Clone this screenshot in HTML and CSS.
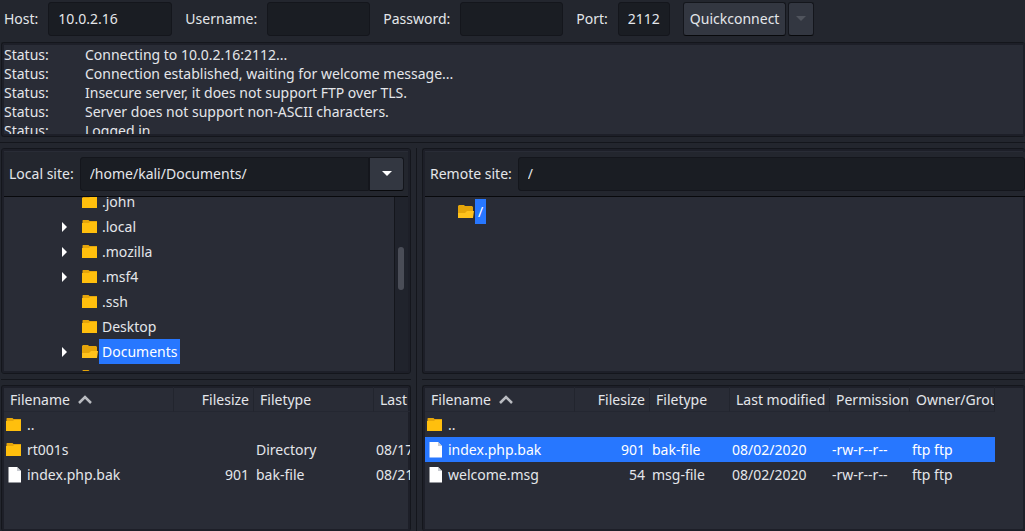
FILE: index.html
```
<!DOCTYPE html>
<html lang="en">
<head>
<meta charset="utf-8">
<title>FTP client</title>
<link rel="stylesheet" href="styles.css">
</head>
<body>
<svg class="defs" aria-hidden="true">
  <symbol id="folder" viewBox="0 0 16 16"><path fill="#e5a50a" d="M.5 14V1.500L1 1h5.500l1 1H15v6H.5z"/><path fill="#ffbf0d" d="M0 4h7l1-1h7v11H0z"/></symbol>
  <symbol id="folder-open" viewBox="0 0 16 16"><path fill="#e5a50a" d="M0 14V2l1-1h5l1 1h7l1 1v11z"/><path fill="#ffc21c" d="M0 14V9h7l2-2h7l-1 7z"/></symbol>
  <symbol id="file" viewBox="0 0 16 16"><path fill="#fff" d="M2.500 0H11l4 4v11.500H2.500z"/><path fill="#c9ccd2" d="M11 0l4 4h-4z"/></symbol>
  <symbol id="right" viewBox="0 0 6 10"><path fill="#fff" d="M0 0l5 5-5 5z"/></symbol>
  <symbol id="down" viewBox="0 0 10 5"><path fill="currentColor" d="M0 0h10L5 5z"/></symbol>
  <symbol id="sort" viewBox="0 0 14 9"><path fill="none" stroke="#b9bbc0" stroke-width="2.500" d="M1 8l6-6 6 6"/></symbol>
</svg>

<form class="connect">
  <label for="host">Host:</label>
  <input class="field host" id="host" type="text" value="10.0.2.16">
  <label for="user">Username:</label>
  <input class="field credential" id="user" type="text">
  <label for="pass">Password:</label>
  <input class="field credential" id="pass" type="password">
  <label for="port">Port:</label>
  <input class="field port" id="port" type="text" value="2112">
  <div class="buttons">
    <button class="button" type="button">Quickconnect</button>
    <button class="button history" type="button" disabled aria-label="Recent servers"><svg class="caret"><use href="#down"/></svg></button>
  </div>
</form>

<section class="log frame" aria-label="Message log">
  <dl class="messages">
    <dt>Status:</dt><dd>Connecting to 10.0.2.16:2112...</dd>
    <dt>Status:</dt><dd>Connection established, waiting for welcome message...</dd>
    <dt>Status:</dt><dd>Insecure server, it does not support FTP over TLS.</dd>
    <dt>Status:</dt><dd>Server does not support non-ASCII characters.</dd>
    <dt>Status:</dt><dd>Logged in</dd>
  </dl>
</section>
<div class="splitter"></div>

<main class="panes">
  <div class="side local">
    <section class="frame browser">
      <div class="path">
        <label for="local">Local site:</label>
        <div class="combo">
          <input class="field" id="local" type="text" value="/home/kali/Documents/">
          <button class="button open" type="button" aria-label="Show local paths"><svg class="caret"><use href="#down"/></svg></button>
        </div>
      </div>
      <div class="tree-area">
        <ul class="tree scrolled">
          <li><span class="twist"></span><svg class="icon"><use href="#folder"/></svg><span class="node">.john</span></li>
          <li><span class="twist"><svg class="arrow"><use href="#right"/></svg></span><svg class="icon"><use href="#folder"/></svg><span class="node">.local</span></li>
          <li><span class="twist"><svg class="arrow"><use href="#right"/></svg></span><svg class="icon"><use href="#folder"/></svg><span class="node">.mozilla</span></li>
          <li><span class="twist"><svg class="arrow"><use href="#right"/></svg></span><svg class="icon"><use href="#folder"/></svg><span class="node">.msf4</span></li>
          <li><span class="twist"></span><svg class="icon"><use href="#folder"/></svg><span class="node">.ssh</span></li>
          <li><span class="twist"></span><svg class="icon"><use href="#folder"/></svg><span class="node">Desktop</span></li>
          <li><span class="twist"><svg class="arrow"><use href="#right"/></svg></span><svg class="icon"><use href="#folder-open"/></svg><span class="node selected">Documents</span></li>
          <li><span class="twist"></span><svg class="icon"><use href="#folder"/></svg></li>
        </ul>
        <div class="scrollbar"><div class="thumb"></div></div>
      </div>
    </section>
    <div class="splitter"></div>
    <section class="frame listing">
      <table class="files local-files">
        <colgroup><col class="c-name"><col class="c-size"><col class="c-type"><col class="c-date"></colgroup>
        <thead><tr><th><span class="name">Filename <svg class="sort"><use href="#sort"/></svg></span></th><th class="num">Filesize</th><th>Filetype</th><th>Last modified</th></tr></thead>
        <tbody>
          <tr><td><span class="name"><svg class="icon"><use href="#folder"/></svg>..</span></td><td></td><td></td><td></td></tr>
          <tr><td><span class="name"><svg class="icon"><use href="#folder"/></svg>rt001s</span></td><td></td><td>Directory</td><td>08/17/2020</td></tr>
          <tr><td><span class="name"><svg class="icon"><use href="#file"/></svg>index.php.bak</span></td><td class="num">901</td><td>bak-file</td><td>08/21/2020</td></tr>
        </tbody>
      </table>
    </section>
  </div>

  <div class="divider"></div>

  <div class="side remote">
    <section class="frame browser">
      <div class="path">
        <label for="remote">Remote site:</label>
        <div class="combo"><input class="field" id="remote" type="text" value="/"></div>
      </div>
      <div class="tree-area">
        <ul class="tree root">
          <li><span class="twist"></span><svg class="icon"><use href="#folder-open"/></svg><span class="node selected">/</span></li>
        </ul>
      </div>
    </section>
    <div class="splitter"></div>
    <section class="frame listing">
      <table class="files remote-files">
        <colgroup><col class="c-name"><col class="c-size"><col class="c-type"><col class="c-date"><col class="c-perm"><col class="c-owner"></colgroup>
        <thead><tr><th><span class="name">Filename <svg class="sort"><use href="#sort"/></svg></span></th><th class="num">Filesize</th><th>Filetype</th><th>Last modified</th><th>Permission</th><th>Owner/Group</th></tr></thead>
        <tbody>
          <tr><td><span class="name"><svg class="icon"><use href="#folder"/></svg>..</span></td><td></td><td></td><td></td><td></td><td></td></tr>
          <tr class="selected"><td><span class="name"><svg class="icon"><use href="#file"/></svg>index.php.bak</span></td><td class="num">901</td><td>bak-file</td><td>08/02/2020</td><td>-rw-r--r--</td><td>ftp ftp</td></tr>
          <tr><td><span class="name"><svg class="icon"><use href="#file"/></svg>welcome.msg</span></td><td class="num">54</td><td>msg-file</td><td>08/02/2020</td><td>-rw-r--r--</td><td>ftp ftp</td></tr>
        </tbody>
      </table>
    </section>
  </div>
</main>
</body>
</html>
```

FILE: styles.css
```
:root {
  --window: #23262e;
  --view: #292c36;
  --input: #1a1d23;
  --edge: #14161c;
  --text: #e4e6ea;
  --accent: #2777ff;
}

* { box-sizing: border-box; }

body {
  margin: 0;
  height: 100vh;
  display: flex;
  flex-direction: column;
  overflow: hidden;
  background: var(--window);
  color: var(--text);
  font: 14px/19px "Noto Sans", sans-serif;
}

.defs { display: none; }

input, button { font: inherit; color: inherit; }

.field {
  height: 34px;
  min-width: 0;
  padding: 0 9px 2px;
  background: var(--input);
  border: 1px solid var(--edge);
  border-radius: 3px;
}

.button {
  height: 34px;
  padding: 0 6px 2px;
  background: #333741;
  border: 1px solid var(--edge);
  border-bottom-color: #08090c;
  border-radius: 3px;
}

.caret { display: block; width: 10px; height: 5px; margin: auto; }

/* Connection bar */
.connect {
  display: flex;
  align-items: center;
  padding: 2px 4px 6px;
}
label { padding-bottom: 2px; }
.connect label { margin-right: 10px; }
.connect .field { margin-right: 13px; }
.host { width: 124px; }
.credential { width: 103px; }
.port { width: 52px; }
.buttons { display: flex; gap: 2px; }
.history { width: 26px; color: #50545d; }

/* Framed views */
.frame {
  background: var(--view);
  border: 1px solid var(--edge);
  border-radius: 3px;
  box-shadow: inset 0 0 0 2px #1d1f28;
  padding: 3px 2px 2px;
  overflow: hidden;
}

.log {
  flex: none;
  height: 95px;
  margin-left: 1px;
  padding-top: 2px;
  border-right: 0;
}
.messages {
  display: grid;
  grid-template-columns: 81px 1fr;
  height: 89px;
  margin: 0;
  overflow: hidden;
}
.messages dd { margin: 0; }

.splitter {
  flex: none;
  height: 11px;
  display: flex;
  align-items: center;
}
.splitter::before {
  content: "";
  flex: 1;
  height: 1px;
  background: var(--edge);
}

.panes {
  flex: 1;
  min-height: 0;
  display: grid;
  grid-template-columns: minmax(0, 411fr) 11px minmax(0, 603fr);
}
.side { display: flex; flex-direction: column; min-height: 0; }
.local { padding-left: 1px; }
.remote .frame { border-right: 0; padding-right: 0; }
.divider { display: flex; justify-content: center; }
.divider::before { content: ""; width: 1px; background: var(--edge); }

.browser {
  flex: none;
  height: 226px;
  display: flex;
  flex-direction: column;
}
.path {
  display: flex;
  align-items: center;
  gap: 6px;
  padding: 5px 4px 5px 5px;
  background: var(--window);
  border-bottom: 1px solid #08090c;
}
.combo { flex: 1; display: flex; min-width: 0; }
.combo .field { flex: 1; }
.local .field { border-radius: 3px 0 0 3px; }
.remote .path { padding-right: 0; }
.open { width: 35px; border-radius: 0 3px 3px 0; color: #fff; }

.tree-area { flex: 1; min-height: 0; display: flex; overflow: hidden; }
.tree { flex: 1; margin: 0; padding: 0 0 0 54px; list-style: none; }
.scrolled { margin-top: -8px; }
.root { padding: 2px 0 0 9px; }
.tree li { display: flex; align-items: center; height: 25px; }
.twist { width: 24px; padding-left: 4px; }
.arrow { display: block; width: 6px; height: 10px; }
.icon { flex: none; width: 16px; height: 16px; }
.node { margin-left: 1px; padding: 3px; }
.selected { background: var(--accent); color: #fff; }

.scrollbar {
  width: 14px;
  padding: 50px 4px 0 3px;
  background: #20232c;
  border-left: 1px solid var(--edge);
}
.thumb { width: 6px; height: 43px; border-radius: 3px; background: #4a4d57; }

/* File lists */
.listing { flex: 1; min-height: 0; padding-top: 1px; border-bottom: 0; padding-bottom: 0; }
.files { table-layout: fixed; border-collapse: separate; border-spacing: 0; }
.local-files { width: 470px; }
.remote-files { width: 570px; }
.local-files .c-name { width: 170px; }
.local-files .c-size { width: 80px; }
.local-files .c-type { width: 120px; }
.local-files .c-date { width: 100px; }
.remote-files .c-name { width: 150px; }
.remote-files .c-size { width: 75px; }
.remote-files .c-type { width: 80px; }
.remote-files .c-date { width: 100px; }
.remote-files .c-perm { width: 80px; }
.remote-files .c-owner { width: 85px; }
.files th, .files td {
  height: 25px;
  padding: 0 5px 0 2px;
  text-align: left;
  font-weight: 400;
  white-space: nowrap;
  overflow: hidden;
}
.files th {
  padding: 0 0 0 6px;
  border-right: 1px solid #22252e;
  border-bottom: 1px solid #242731;
}
.files th.num { padding-left: 0; padding-right: 4px; }
.files .num { text-align: right; }
.name { display: flex; align-items: center; }
th .name { gap: 8px; }
td .name { gap: 5px; }
.sort { width: 14px; height: 9px; }
```
